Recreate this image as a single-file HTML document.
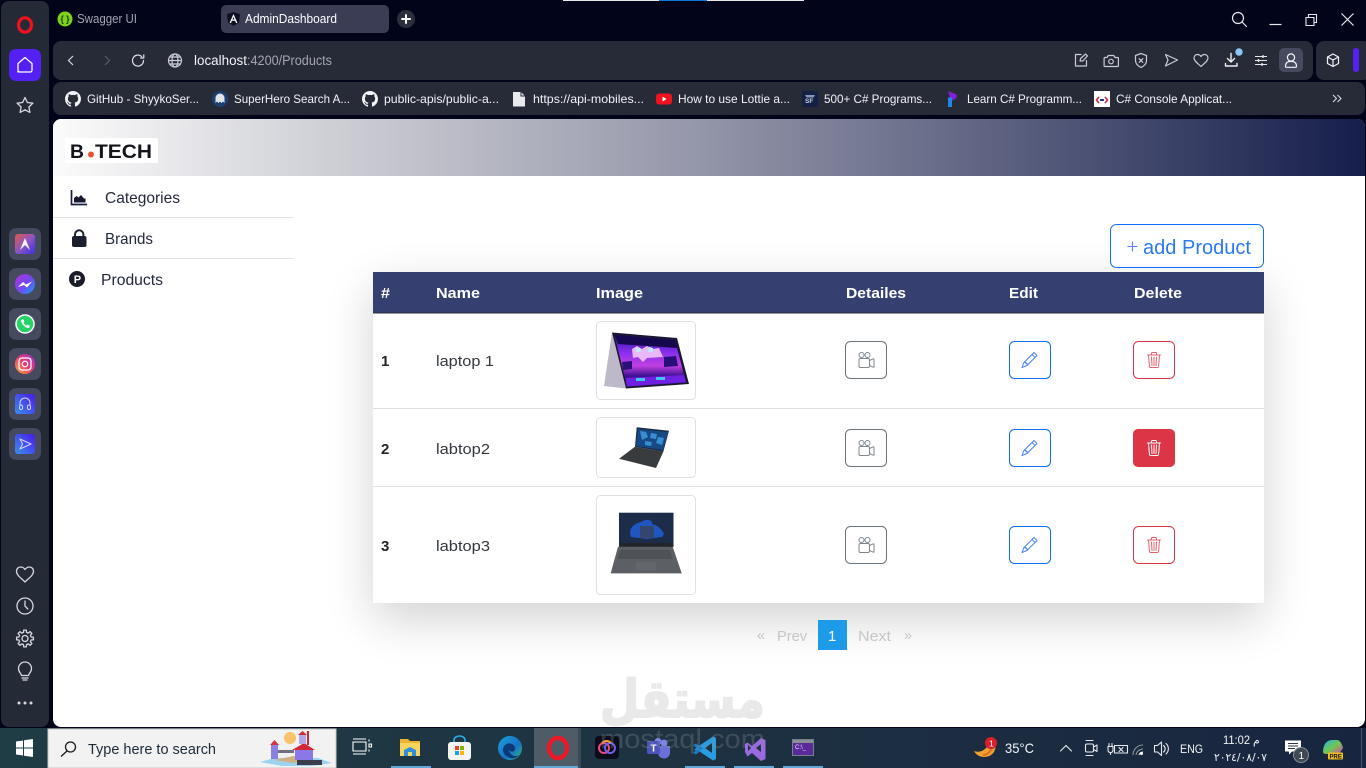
<!DOCTYPE html>
<html lang="en"><head><meta charset="utf-8"><title>AdminDashboard</title>
<style>
html,body{margin:0;padding:0;background:#02041a;width:1366px;height:768px;overflow:hidden}
svg{display:block}
text{font-family:"Liberation Sans","DejaVu Sans",sans-serif}
.tb{font-size:12px;fill:#f2f3f6}
.ico{fill:none;stroke:#c9ccd4;stroke-width:1.2;stroke-linecap:round;stroke-linejoin:round}
.sb{fill:none;stroke:#d6d8de;stroke-width:1.3;stroke-linecap:round;stroke-linejoin:round}
.nav{font-size:16px;fill:#24283c}
.th{font-size:15px;font-weight:bold;fill:#fff}
.td{font-size:15px;fill:#33373d}
.tn{font-size:15px;font-weight:bold;fill:#212529}
.pg{font-size:15px;fill:#c6c6c6}
.tray{fill:none;stroke:#e8ebee;stroke-width:1.1;stroke-linecap:round;stroke-linejoin:round}
</style></head><body>
<svg width="1366" height="768" viewBox="0 0 1366 768" xmlns="http://www.w3.org/2000/svg">
<defs>
<linearGradient id="hd" x1="0" x2="1" y1="0" y2="0"><stop offset="0" stop-color="#fbfbfb"/><stop offset=".25" stop-color="#c6c7cf"/><stop offset=".5" stop-color="#9295a8"/><stop offset=".75" stop-color="#565b7b"/><stop offset="1" stop-color="#151e4b"/></linearGradient>
<linearGradient id="tk" x1="0" x2="1" y1="0" y2="0"><stop offset="0" stop-color="#1f3d45"/><stop offset=".5" stop-color="#1e3242"/><stop offset="1" stop-color="#18253f"/></linearGradient>
<linearGradient id="s1" x1="0" x2="1" y1="0" y2="1"><stop offset="0" stop-color="#e2584a"/><stop offset=".5" stop-color="#8e55c0"/><stop offset="1" stop-color="#3a30e0"/></linearGradient>
<linearGradient id="s2" x1="0" x2="1" y1="0" y2="1"><stop offset="0" stop-color="#b530d8"/><stop offset=".55" stop-color="#6f4cf0"/><stop offset="1" stop-color="#12a0f0"/></linearGradient>
<linearGradient id="s3" x1="1" x2="0" y1="0" y2="1"><stop offset="0" stop-color="#9a30d8"/><stop offset=".5" stop-color="#e83a70"/><stop offset="1" stop-color="#fcb030"/></linearGradient>
<linearGradient id="s4" x1="0" x2="1" y1="1" y2="0"><stop offset="0" stop-color="#3a90f0"/><stop offset="1" stop-color="#4a18e8"/></linearGradient>
<linearGradient id="lp1" x1="0" x2="0" y1="0" y2="1"><stop offset="0" stop-color="#2a10a0"/><stop offset=".35" stop-color="#8a30f0"/><stop offset=".6" stop-color="#c040e0"/><stop offset=".8" stop-color="#3a1090"/><stop offset="1" stop-color="#6a20e0"/></linearGradient>
<linearGradient id="edge" x1="0" x2="1" y1="0" y2="1"><stop offset="0" stop-color="#1aa0d8"/><stop offset=".6" stop-color="#1a70c8"/><stop offset="1" stop-color="#2fc070"/></linearGradient>
<linearGradient id="cp" x1="0" x2="1" y1="0" y2="1"><stop offset="0" stop-color="#28b0e8"/><stop offset=".5" stop-color="#70c850"/><stop offset="1" stop-color="#e040b0"/></linearGradient>
<filter id="blur" x="-30%" y="-40%" width="160%" height="180%"><feGaussianBlur stdDeviation="24"/></filter>
<clipPath id="mainclip"><rect x="293" y="176" width="1072" height="551"/></clipPath>
<symbol id="reel" viewBox="0 0 16 16"><path d="M6 3a3 3 0 1 1-6 0 3 3 0 0 1 6 0M1 3a2 2 0 1 0 4 0 2 2 0 0 0-4 0"/><path d="M9 6h.5a2 2 0 0 1 1.983 1.738l3.11-1.382A1 1 0 0 1 16 7.269v7.462a1 1 0 0 1-1.406.913l-3.111-1.382A2 2 0 0 1 9.5 16H2a2 2 0 0 1-2-2V8a2 2 0 0 1 2-2zm6 8.73V7.27l-3.5 1.555v4.35zM1 8v6a1 1 0 0 0 1 1h7.5a1 1 0 0 0 1-1V8a1 1 0 0 0-1-1H2a1 1 0 0 0-1 1"/><path d="M9 6a3 3 0 1 0 0-6 3 3 0 0 0 0 6M7 3a2 2 0 1 1 4 0 2 2 0 0 1-4 0"/></symbol>
<symbol id="pen" viewBox="0 0 16 16"><path d="M12.146.146a.5.5 0 0 1 .708 0l3 3a.5.5 0 0 1 0 .708l-10 10a.5.5 0 0 1-.168.11l-5 2a.5.5 0 0 1-.65-.65l2-5a.5.5 0 0 1 .11-.168zM11.207 2.5 13.5 4.793 14.793 3.5 12.5 1.207zm1.586 3L10.5 3.207 4 9.707V10h.5a.5.5 0 0 1 .5.5v.5h.5a.5.5 0 0 1 .5.5v.5h.293zm-9.761 5.175-.106.106-1.528 3.821 3.821-1.528.106-.106A.5.5 0 0 1 5 12.5V12h-.5a.5.5 0 0 1-.5-.5V11h-.5a.5.5 0 0 1-.468-.325"/></symbol>
<symbol id="trash" viewBox="0 0 16 16"><path d="M6.5 1h3a.5.5 0 0 1 .5.5v1H6v-1a.5.5 0 0 1 .5-.5M11 2.5v-1A1.5 1.5 0 0 0 9.5 0h-3A1.5 1.5 0 0 0 5 1.5v1H1.5a.5.5 0 0 0 0 1h.538l.853 10.66A2 2 0 0 0 4.885 16h6.23a2 2 0 0 0 1.994-1.84l.853-10.66h.538a.5.5 0 0 0 0-1zm1.958 1-.846 10.58a1 1 0 0 1-.997.92h-6.23a1 1 0 0 1-.997-.92L3.042 3.5zm-7.487 1a.5.5 0 0 1 .528.47l.5 8.5a.5.5 0 0 1-.998.06L5 5.03a.5.5 0 0 1 .47-.53Zm5.058 0a.5.5 0 0 1 .47.53l-.5 8.5a.5.5 0 1 1-.998-.06l.5-8.5a.5.5 0 0 1 .528-.47M8 4.5a.5.5 0 0 1 .5.5v8.5a.5.5 0 0 1-1 0V5a.5.5 0 0 1 .5-.5"/></symbol>
<symbol id="gh" viewBox="0 0 16 16"><path fill="#f2f3f6" d="M8 0C3.58 0 0 3.58 0 8c0 3.54 2.29 6.53 5.47 7.59.4.07.55-.17.55-.38 0-.19-.01-.82-.01-1.49-2.01.37-2.53-.49-2.69-.94-.09-.23-.48-.94-.82-1.13-.28-.15-.68-.52-.01-.53.63-.01 1.08.58 1.23.82.72 1.21 1.87.87 2.33.66.07-.52.28-.87.51-1.07-1.78-.2-3.64-.89-3.64-3.95 0-.87.31-1.59.82-2.15-.08-.2-.36-1.02.08-2.12 0 0 .67-.21 2.2.82.64-.18 1.32-.27 2-.27s1.36.09 2 .27c1.53-1.04 2.2-.82 2.2-.82.44 1.1.16 1.92.08 2.12.51.56.82 1.27.82 2.15 0 3.07-1.87 3.75-3.65 3.95.29.25.54.73.54 1.48 0 1.07-.01 1.93-.01 2.2 0 .21.15.46.55.38A8.01 8.01 0 0 0 16 8c0-4.42-3.58-8-8-8"/></symbol>
</defs>

<!-- window background -->
<rect width="1366" height="768" fill="#02041a"/>
<rect x="563" y="0" width="96" height="1" fill="#e8e8e8"/><rect x="659" y="0" width="48" height="1" fill="#0a78d4"/><rect x="707" y="0" width="97" height="1" fill="#e8e8e8"/>

<!-- left sidebar -->
<rect x="1" y="1" width="48" height="726" rx="8" fill="#252a37"/>
<ellipse cx="25" cy="25" rx="6.5" ry="7.2" fill="none" stroke="#f0101e" stroke-width="3.2"/>
<rect x="9" y="49" width="32" height="32" rx="7" fill="#5420f4"/>
<path d="M18 72V63.5L25 57.5L32 63.5V70Q32 72 30 72H20Q18 72 18 70Z" fill="none" stroke="#fff" stroke-width="1.3" stroke-linejoin="round"/>
<path class="sb" d="M25 97.5l2.4 5 5.5.7-4 3.8 1 5.4-4.9-2.6-4.9 2.6 1-5.4-4-3.8 5.5-.7z"/>
<g fill="#454a5f"><rect x="9" y="228" width="32" height="32" rx="7"/><rect x="9" y="268" width="32" height="32" rx="7"/><rect x="9" y="308" width="32" height="32" rx="7"/><rect x="9" y="348" width="32" height="32" rx="7"/><rect x="9" y="388" width="32" height="32" rx="7"/><rect x="9" y="428" width="32" height="32" rx="7"/></g>
<rect x="15" y="234" width="20" height="20" rx="3" fill="url(#s1)"/><path d="M20 250l5-12 5 12-5-5z" fill="#f5f5f5"/>
<circle cx="25" cy="284" r="10" fill="url(#s2)"/><path d="M18 287l5-5 3 2.500 6-3-5 6-3-2.500z" fill="#fff"/>
<circle cx="25" cy="324" r="9" fill="#25d366" stroke="#fff" stroke-width="1.500"/><path d="M21 320c0 4 4 8 8 8l1-2-2.500-1.500-1 1c-1.500-.5-2.500-1.500-3-3l1-1-1.500-2.500z" fill="#fff"/>
<circle cx="25" cy="364" r="10" fill="url(#s3)"/><rect x="19" y="358" width="12" height="12" rx="3" fill="none" stroke="#fff" stroke-width="1.300"/><circle cx="25" cy="364" r="2.800" fill="none" stroke="#fff" stroke-width="1.200"/>
<rect x="15" y="394" width="20" height="20" rx="3" fill="url(#s4)"/><path d="M20 406v-3a5 5 0 0 1 10 0v3" fill="none" stroke="#d8d0ff" stroke-width="1"/><rect x="19.500" y="405" width="3" height="4.500" rx="1.500" fill="none" stroke="#d8d0ff"/><rect x="27.500" y="405" width="3" height="4.500" rx="1.500" fill="none" stroke="#d8d0ff"/>
<rect x="15" y="434" width="20" height="20" rx="3" fill="url(#s4)"/><path d="M20 439l11 5-11 5 2.500-5z" fill="none" stroke="#d8d0ff" stroke-width="1.100" stroke-linejoin="round"/>
<path class="sb" d="M25 582C21 578 16.500 575 16.500 571.500C16.500 568.500 18.500 567 20.500 567C22.500 567 24 568 25 569.500C26 568 27.500 567 29.500 567C31.500 567 33.500 568.500 33.500 571.500C33.500 575 29 578 25 582Z"/>
<circle class="sb" cx="25" cy="606" r="8"/><path class="sb" d="M25 601v5l2.800 3"/>
<g transform="translate(25 638.500)"><circle class="sb" r="3"/><polygon class="sb" points="-1.52,-6.11 -1.33,-8.4 1.33,-8.4 1.52,-6.11 3.25,-5.39 5,-6.88 6.88,-5 5.39,-3.25 6.11,-1.52 8.4,-1.33 8.4,1.33 6.11,1.52 5.39,3.25 6.88,5 5,6.88 3.25,5.39 1.52,6.11 1.33,8.4 -1.33,8.4 -1.52,6.11 -3.25,5.39 -5,6.88 -6.88,5 -5.39,3.25 -6.11,1.52 -8.4,1.33 -8.4,-1.33 -6.11,-1.52 -5.39,-3.25 -6.88,-5 -5,-6.88 -3.25,-5.39"/></g>
<path class="sb" d="M21.500 675.500c0-2-3-3-3-7a6.500 6.500 0 0 1 13 0c0 4-3 5-3 7zM22 678h6M23 680h4"/>
<g fill="#d6d8de"><circle cx="19" cy="703" r="1.500"/><circle cx="25" cy="703" r="1.500"/><circle cx="31" cy="703" r="1.500"/></g>

<!-- tabs -->
<circle cx="65" cy="19" r="7.500" fill="#7bd11c"/><text x="60.500" y="22" font-size="9" fill="#1c3a10" font-weight="bold" textLength="9" lengthAdjust="spacingAndGlyphs">{ }</text>
<text x="77" y="23" font-size="12.500" fill="#a3a6b0" textLength="60" lengthAdjust="spacingAndGlyphs">Swagger UI</text>
<rect x="221" y="5" width="168" height="28" rx="5" fill="#3a3d54"/>
<path d="M233.500 12l6.500 2.300-1 8.500-5.500 3-5.500-3-1-8.500z" fill="#0e1020"/><path d="M233.500 14l-4 9h1.500l.9-2.200h3.200l.9 2.200h1.500zM232.500 19.500l1-2.600 1 2.600z" fill="#fff"/>
<text x="245" y="23" font-size="12.500" fill="#fff" textLength="92" lengthAdjust="spacingAndGlyphs">AdminDashboard</text>
<circle cx="406" cy="19" r="9" fill="#2b2f3c"/><path d="M406 15v8M402 19h8" stroke="#fff" stroke-width="2" stroke-linecap="round"/>
<circle class="ico" cx="1238" cy="18" r="5.500" style="stroke:#e8e8ec"/><path class="ico" d="M1242 22l4.500 4.500" style="stroke:#e8e8ec"/>
<path d="M1269.500 24.500h12" stroke="#e8e8ec" stroke-width="1.200"/>
<path d="M1306 17.500h8v8h-8zM1308.500 17.500v-3h8v8h-2.500" fill="none" stroke="#e8e8ec" stroke-width="1.100"/>
<path d="M1341.500 13.500l12 12M1353.500 13.500l-12 12" stroke="#e8e8ec" stroke-width="1.200"/>

<!-- address bar -->
<rect x="53" y="41" width="1260" height="39" rx="8" fill="#272b38"/>
<rect x="1316" y="41" width="55" height="39" rx="8" fill="#272b38"/>
<path d="M73 56l-4.500 4.500L73 65" fill="none" stroke="#d6d8de" stroke-width="1.200"/>
<path d="M105 56l4.500 4.500L105 65" fill="none" stroke="#5b5f6c" stroke-width="1.200"/>
<path class="ico" d="M143.500 60.500a5.500 5.500 0 1 1-1.800-4M143.800 54.800v3.200h-3.200" style="stroke:#e0e2e8"/>
<circle class="ico" cx="175" cy="60.500" r="6.500"/><ellipse class="ico" cx="175" cy="60.500" rx="3" ry="6.500"/><path class="ico" d="M168.500 60.500h13M169.500 57h11M169.500 64h11"/>
<text x="194" y="65" font-size="13.500" fill="#f2f3f6" textLength="53" lengthAdjust="spacingAndGlyphs">localhost</text>
<text x="247" y="65" font-size="13.500" fill="#a3a6b0" textLength="85" lengthAdjust="spacingAndGlyphs">:4200/Products</text>
<path class="ico" d="M1081 54.500h-5.500v11.500h11v-5.500M1080 61l.6-2.500 5-4.500 1.900 1.900-4.500 5z"/>
<path class="ico" d="M1104.500 57.500h2.500l1.300-2h5.400l1.300 2h2.500a.9.9 0 0 1 .9.900v7.200a.9.900 0 0 1-.9.900h-12.500a.9.900 0 0 1-.9-.900v-7.200a.9.900 0 0 1 .9-.900z"/><circle class="ico" cx="1111" cy="61.500" r="2.300"/>
<path class="ico" d="M1141 53.500l5.500 2v5c0 3.500-2.500 5.500-5.500 7-3-1.500-5.500-3.500-5.500-7v-5zM1139.200 58.700l3.600 3.600M1142.800 58.700l-3.600 3.600"/>
<path class="ico" d="M1165.500 54.500l12 5.500-12 6 2.500-6z"/>
<path class="ico" d="M1201 66.500c-3-3-7-5.500-7-8.500 0-2.500 2-3.500 3.500-3.500 1.500 0 2.700.8 3.500 2 .8-1.200 2-2 3.500-2 1.500 0 3.500 1 3.500 3.500 0 3-4 5.500-7 8.500z"/>
<path d="M1231 53.500v8M1227.500 58.500l3.500 3.500 3.500-3.500M1225.500 63.500v2.500h11.500v-2.500" fill="none" stroke="#f0f0f4" stroke-width="1.400" stroke-linecap="round" stroke-linejoin="round"/>
<circle cx="1239" cy="52" r="3.700" fill="#8cc6f6"/>
<path d="M1255 56.500h12M1255 60.500h12M1255 64.500h12" stroke="#e8e8ec" stroke-width="1.100"/><path d="M1263 55v3M1258.500 59v3M1262 63v3" stroke="#e8e8ec" stroke-width="1.300"/>
<rect x="1279" y="48" width="24" height="24" rx="5" fill="#454a5f"/>
<circle cx="1291" cy="57.500" r="3.600" fill="none" stroke="#f2f3f6" stroke-width="1.200"/><path d="M1285.500 66.500c0-3 1.500-4.500 3.500-5h4c2 .5 3.500 2 3.500 5 0 .5-.5 .8-1 .8h-9c-.5 0-1-.3-1-.8z" fill="none" stroke="#f2f3f6" stroke-width="1.200"/>
<path d="M1333 54l5.500 3v6.500l-5.500 3-5.500-3V57zM1327.500 57l5.500 3 5.500-3M1333 60v6.500" fill="none" stroke="#f2f3f6" stroke-width="1.200" stroke-linejoin="round"/>
<rect x="1353" y="48" width="6" height="24" rx="3" fill="#5420f4"/>

<!-- bookmarks -->
<rect x="53" y="82" width="1312" height="33" rx="8" fill="#272b38"/>
<use href="#gh" x="65" y="91" width="16" height="16"/>
<text class="tb" x="87" y="103" textLength="112" lengthAdjust="spacingAndGlyphs">GitHub - ShyykoSer...</text>
<circle cx="220" cy="99" r="8" fill="#1b3f6e"/><path d="M215.500 103v-5a4.500 4.500 0 0 1 9 0v5l-1.500-1.500-1.500 1.500-1.500-1.500-1.500 1.500-1.500-1.500z" fill="#e0e4ea"/>
<text class="tb" x="234" y="103" textLength="116" lengthAdjust="spacingAndGlyphs">SuperHero Search A...</text>
<use href="#gh" x="362" y="91" width="16" height="16"/>
<text class="tb" x="384" y="103" textLength="115" lengthAdjust="spacingAndGlyphs">public-apis/public-a...</text>
<path d="M513 92h8l4 4v10.500h-12z" fill="#e8eaee"/><path d="M521 92v4h4" fill="none" stroke="#272b38"/>
<text class="tb" x="533" y="103" textLength="111" lengthAdjust="spacingAndGlyphs">https://api-mobiles...</text>
<rect x="656" y="93.500" width="16" height="11" rx="3" fill="#f0121e"/><path d="M662.500 96.500v5l4-2.500z" fill="#fff"/>
<text class="tb" x="678" y="103" textLength="112" lengthAdjust="spacingAndGlyphs">How to use Lottie a...</text>
<rect x="802" y="91" width="16" height="16" fill="#152045"/><text x="805" y="103" font-size="6.500" fill="#c8d0e0" font-weight="bold">SF</text><path d="M805 95h10l-1.500 2.500h-7z" fill="#8898b8"/>
<text class="tb" x="824" y="103" textLength="108" lengthAdjust="spacingAndGlyphs">500+ C# Programs...</text>
<path d="M948 91l8.500 3.500c1 3-1 5.500-5.500 6z" fill="#8320e0"/><rect x="948" y="97.500" width="4" height="9.500" fill="#1e88e8"/>
<text class="tb" x="967" y="103" textLength="115" lengthAdjust="spacingAndGlyphs">Learn C# Programm...</text>
<rect x="1094" y="91" width="16" height="16" fill="#fff"/><path d="M1099 97l-2.500 3 2.500 3M1105 97l2.500 3-2.500 3" fill="none" stroke="#d02a38" stroke-width="1.600"/><path d="M1100 100h4" stroke="#2a3a88" stroke-width="2"/>
<text class="tb" x="1116" y="103" textLength="116" lengthAdjust="spacingAndGlyphs">C# Console Applicat...</text>
<path d="M1333 95l3.500 3.500-3.500 3.500M1337.500 95l3.500 3.500-3.500 3.500" fill="none" stroke="#d6d8de" stroke-width="1.100"/>

<!-- page -->
<rect x="53" y="119" width="1312" height="608" rx="8" fill="#fff"/>
<path d="M53 176V127a8 8 0 0 1 8-8H1357a8 8 0 0 1 8 8V176z" fill="url(#hd)"/>
<rect x="65" y="138" width="93" height="25" fill="#fff"/>
<text x="70" y="158" font-size="19.500" font-weight="bold" fill="#14151c" textLength="14" lengthAdjust="spacingAndGlyphs">B</text>
<circle cx="91" cy="154.500" r="3" fill="#ea4f30"/>
<text x="95" y="158" font-size="19.500" font-weight="bold" fill="#14151c" textLength="57" lengthAdjust="spacingAndGlyphs">TECH</text>

<!-- shadow -->
<g clip-path="url(#mainclip)"><rect x="373" y="288" width="891" height="331" fill="#000" opacity=".175" filter="url(#blur)"/></g>

<!-- side menu -->
<rect x="53" y="217" width="240" height="1" fill="#dee2e6"/><rect x="53" y="258" width="240" height="1" fill="#dee2e6"/>
<path d="M71.500 190v14.500h15.500" fill="none" stroke="#1c2040" stroke-width="1.700"/><path d="M74 202.500v-4.500l2.500-2 2 1.500 2.500-2.500 3 3.500 1.500 0v4z" fill="#15182e"/>
<text class="nav" x="105" y="203" textLength="75" lengthAdjust="spacingAndGlyphs">Categories</text>
<rect x="72" y="236" width="14.500" height="11" rx="2" fill="#1d1f2e"/><path d="M75 237v-2.500a4.200 4.200 0 0 1 8.400 0V237" fill="none" stroke="#1d1f2e" stroke-width="2"/>
<text class="nav" x="105" y="244" textLength="48" lengthAdjust="spacingAndGlyphs">Brands</text>
<circle cx="77" cy="279" r="8" fill="#1a1c28"/><text x="73.700" y="283" font-size="11" font-weight="bold" fill="#fff">P</text>
<text class="nav" x="101" y="285" textLength="62" lengthAdjust="spacingAndGlyphs">Products</text>

<!-- add button -->
<rect x="1110.500" y="224.500" width="153" height="43" rx="6" fill="#fff" stroke="#0d6efd"/>
<path d="M1132.500 241.500v10M1127.500 246.500h10" stroke="#5a80f0" stroke-width="1.100"/>
<text x="1143" y="254" font-size="20" fill="#2b78f0" textLength="108" lengthAdjust="spacingAndGlyphs">add Product</text>

<!-- table -->
<rect x="373" y="272" width="891" height="331" fill="#fff"/>
<rect x="373" y="272" width="891" height="41" fill="#354070"/>
<rect x="373" y="312.500" width="891" height="1" fill="#2c3040"/>
<text class="th" x="381" y="298" textLength="9" lengthAdjust="spacingAndGlyphs">#</text>
<text class="th" x="436" y="298" textLength="44" lengthAdjust="spacingAndGlyphs">Name</text>
<text class="th" x="596" y="298" textLength="47" lengthAdjust="spacingAndGlyphs">Image</text>
<text class="th" x="846" y="298" textLength="60" lengthAdjust="spacingAndGlyphs">Detailes</text>
<text class="th" x="1009" y="298" textLength="29" lengthAdjust="spacingAndGlyphs">Edit</text>
<text class="th" x="1134" y="298" textLength="48" lengthAdjust="spacingAndGlyphs">Delete</text>
<rect x="373" y="408" width="891" height="1" fill="#dee2e6"/><rect x="373" y="486" width="891" height="1" fill="#dee2e6"/>

<text class="tn" x="381" y="366">1</text><text class="td" x="436" y="366" textLength="58" lengthAdjust="spacingAndGlyphs">laptop 1</text>
<text class="tn" x="381" y="454">2</text><text class="td" x="436" y="454" textLength="54" lengthAdjust="spacingAndGlyphs">labtop2</text>
<text class="tn" x="381" y="551">3</text><text class="td" x="436" y="551" textLength="54" lengthAdjust="spacingAndGlyphs">labtop3</text>

<rect x="596.500" y="321.500" width="99" height="78" rx="4" fill="#fff" stroke="#dee2e6"/>
<rect x="596.500" y="417.500" width="99" height="60" rx="4" fill="#fff" stroke="#dee2e6"/>
<rect x="596.500" y="495.500" width="99" height="99" rx="4" fill="#fff" stroke="#dee2e6"/>

<!-- laptop 1 -->
<path d="M612 332.500L604 386l22 2.500z" fill="#bdb9c8"/>
<path d="M612 332.500l65 5.500 12 46-63 4.500z" fill="#1a1830"/>
<path d="M614.500 335l60.500 5 11 42.500-59 4z" fill="url(#lp1)"/>
<path d="M614.500 335l60.500 5 2 8-59-4z" fill="#16084e"/>
<path d="M632 349l5-3 5 3 5-3 6 3 6-1 4 9-16 1-4 4-5-5-5 1z" fill="#e9b8f8"/>
<path d="M636 347.500l4 .5 1 4h-5zM649 347l4 1v4h-5z" fill="#bfeaff"/>
<path d="M622 362l10-1 0 8-9 1zM664 357l12-1 2 10-14 1z" fill="#2a0f78"/>
<path d="M626 378l58-3 2 7-59 4z" fill="#7020e0"/>
<path d="M636 378h9v3h-9zM656 377h9v3h-9z" fill="#42c4f2"/>

<!-- laptop 2 -->
<path d="M636.700 427.300L669 430.700 663.300 451.700 635 446.700z" fill="#1c2a44"/>
<path d="M638 429l30 3-5 18-27-4z" fill="#164a86"/>
<path d="M640 431l6 1 2 5-6 3zM651 433l6 1-1 5-6-1zM645 441l7 1-1 4-6-1zM658 437l6 1-2 7-6-2z" fill="#3a8ed0"/>
<path d="M635 446.700l28.300 5L656 468l-37-9.300z" fill="#383c3e"/>

<!-- laptop 3 -->
<rect x="619" y="512.700" width="54.500" height="34" fill="#1d2c48"/>
<path d="M631 537c-3-8 2-13 10-15 6-4 12-2 11 2 5 1 10 5 12 10l-2 3-15 2z" fill="#1f56c0"/>
<rect x="640" y="526" width="14" height="12" fill="#34466e"/>
<rect x="619" y="543" width="54.500" height="4" fill="#22262c"/>
<path d="M618 546.700h54.700l9 26.600h-71z" fill="#5c6064"/>
<path d="M620 550h50l2.500 9h-55z" fill="#4e5256"/>
<rect x="636" y="562" width="20" height="8" fill="#63676c"/>
<rect x="611" y="573" width="71" height="1" fill="#bfc2c6"/>

<!-- action buttons -->
<g fill="#fff">
<rect x="845.500" y="341.500" width="41" height="37" rx="5" stroke="#6c757d"/><rect x="845.500" y="429.500" width="41" height="37" rx="5" stroke="#6c757d"/><rect x="845.500" y="526.500" width="41" height="37" rx="5" stroke="#6c757d"/>
<rect x="1009.500" y="341.500" width="41" height="37" rx="5" stroke="#0d6efd"/><rect x="1009.500" y="429.500" width="41" height="37" rx="5" stroke="#0d6efd"/><rect x="1009.500" y="526.500" width="41" height="37" rx="5" stroke="#0d6efd"/>
<rect x="1133.500" y="341.500" width="41" height="37" rx="5" stroke="#dc3545"/><rect x="1133.500" y="526.500" width="41" height="37" rx="5" stroke="#dc3545"/>
</g>
<rect x="1133" y="429" width="42" height="38" rx="5" fill="#dc3545"/>
<g fill="#80868d"><use href="#reel" x="858" y="352" width="17" height="16"/><use href="#reel" x="858" y="440" width="17" height="16"/><use href="#reel" x="858" y="537" width="17" height="16"/></g>
<g fill="#4a80f0"><use href="#pen" x="1021" y="352" width="17" height="16"/><use href="#pen" x="1021" y="440" width="17" height="16"/><use href="#pen" x="1021" y="537" width="17" height="16"/></g>
<g fill="#e4606c"><use href="#trash" x="1146" y="352" width="16" height="16"/><use href="#trash" x="1146" y="537" width="16" height="16"/></g>
<g fill="#fff"><use href="#trash" x="1146" y="440" width="16" height="16"/></g>

<!-- pagination -->
<text class="pg" x="757" y="640" font-size="13" textLength="8" lengthAdjust="spacingAndGlyphs">«</text>
<text class="pg" x="777" y="641" textLength="30" lengthAdjust="spacingAndGlyphs">Prev</text>
<rect x="818" y="620" width="29" height="30" fill="#1e9be8"/>
<text x="828" y="641" font-size="15" fill="#fff">1</text>
<text class="pg" x="858" y="641" textLength="33" lengthAdjust="spacingAndGlyphs">Next</text>
<text class="pg" x="904" y="640" font-size="13" textLength="8" lengthAdjust="spacingAndGlyphs">»</text>

<!-- taskbar -->
<rect x="0" y="728" width="1366" height="40" fill="url(#tk)"/>
<path d="M16 741.500l7-1v7h-7zM24 740.300l9-1.300v8.500h-9zM16 748.500h7v7l-7-1zM24 748.500h9v8.500l-9-1.300z" fill="#fff"/>
<rect x="48" y="729" width="288" height="39" fill="#f2f2f2" stroke="#c8c8c8"/>
<circle cx="70.500" cy="747" r="5" fill="none" stroke="#1a1a1a" stroke-width="1.300"/><path d="M67 751l-6 5.500" stroke="#1a1a1a" stroke-width="1.300"/>
<text x="88" y="754" font-size="14.500" fill="#1c2a3a" textLength="128" lengthAdjust="spacingAndGlyphs">Type here to search</text>
<!-- search illustration -->
<circle cx="290" cy="738" r="6" fill="#f6c26a"/>
<path d="M260 762l14-4h44l14 5-20 3h-30z" fill="#9cd4f0"/>
<path d="M274 760l20-4 10 3-10 4z" fill="#d0b080"/>
<rect x="271" y="745" width="7" height="14" fill="#8a80e0"/><path d="M270 745l4.500-5 4.500 5z" fill="#d83040"/>
<rect x="278" y="750" width="16" height="3" fill="#707080"/>
<rect x="295" y="750" width="18" height="10" fill="#8a78e8"/><path d="M292 750l12-7 11 7z" fill="#d02838"/>
<rect x="299" y="735" width="7" height="9" fill="#b0a8e8"/><path d="M298 735l4.500-4 4.500 4z" fill="#d02838"/><rect x="307" y="731" width="2" height="14" fill="#d02838"/>
<rect x="297" y="760" width="25" height="5" fill="#3a3d4c"/>

<path d="M353 742h13v9h-13zM353 739h13M353 754h13M369 739.500v2M369 744h2.500v3H369zM369 749.500v2" fill="none" stroke="#fff" stroke-width="1.100"/>
<path d="M400 739h8l2 2h10v15h-20z" fill="#f0b030"/><path d="M400 743h20v13h-20z" fill="#f9d45c"/><path d="M404 756v-6l6-3 6 3v6h-4v-4h-4v4z" fill="#2e90d8"/>
<rect x="391" y="766" width="40" height="2" fill="#5fa8d8"/>
<rect x="448" y="742" width="23" height="18" rx="3" fill="#f4f4f4"/><path d="M454 742v-2a5.500 4 0 0 1 11 0v2" fill="none" stroke="#2ab0e8" stroke-width="1.600"/><rect x="455" y="746" width="4" height="4" fill="#ea4030"/><rect x="460" y="746" width="4" height="4" fill="#7fb800"/><rect x="455" y="751" width="4" height="4" fill="#18a0e8"/><rect x="460" y="751" width="4" height="4" fill="#f8b808"/>
<circle cx="510" cy="748" r="12" fill="url(#edge)"/><path d="M503 750c0-5 5-8 9-6 3 1.500 4 5 2 7-2 1.500-4 0-5-1 0 4 5 8 10 5-3 4-8 4-11 2-3-1.500-5-4-5-7z" fill="#0c3a78"/>
<rect x="534" y="728" width="44" height="40" fill="#4d5c66"/>
<ellipse cx="558" cy="748" rx="9" ry="10" fill="none" stroke="#ea1a28" stroke-width="4.500"/>
<rect x="534" y="766" width="44" height="2" fill="#5fa8d8"/>
<rect x="578" y="728" width="3" height="40" fill="#3c4a54"/>
<rect x="595" y="736" width="24" height="23" rx="4" fill="#0b0d1a"/><circle cx="604" cy="748" r="5" fill="none" stroke="#e84a80" stroke-width="2"/><circle cx="610" cy="748" r="5" fill="none" stroke="#6a60f0" stroke-width="2"/><path d="M602 743a6 6 0 0 1 9 0" fill="none" stroke="#f0a030" stroke-width="2"/>
<circle cx="664" cy="743" r="3.500" fill="#7b83eb"/><circle cx="658" cy="741.500" r="3.500" fill="#7b83eb"/><path d="M654 746h16v6a6 6 0 0 1-12 1z" fill="#6a70d8"/><rect x="647" y="741" width="13" height="13" rx="1.500" fill="#4b53bc"/><text x="650.500" y="751.500" font-size="10" font-weight="bold" fill="#fff">T</text>
<path d="M694 750l4-3.500 15-10 3 1.500v21l-3 1.500-15-10zM712 753v-10l-7 5z" fill="#2a9ce0" fill-rule="evenodd"/><path d="M693 745l3-1.500 7 4.500-3 3zM693 753l3 1.500 5-4-3-2.500z" fill="#1a7ac0"/>
<path d="M745 752v-8l2.500-1.500 4.500 3.500 9-8 4.500 2v19l-4.500 2-9-8-4.500 3.500zM761 752v-8l-5 4zM748 751v-6l3 3z" fill="#9a6ae0" fill-rule="evenodd"/>
<rect x="792.500" y="739.500" width="21" height="16" fill="#5a2a98" stroke="#77808a"/><rect x="793" y="740" width="20" height="3" fill="#8a8f98"/><text x="795" y="749" font-size="6" fill="#e8e8ff" font-family="Liberation Mono, monospace">C:\_</text>
<rect x="685" y="766" width="40" height="2" fill="#5fa8d8"/><rect x="734" y="766" width="40" height="2" fill="#5fa8d8"/><rect x="783" y="766" width="40" height="2" fill="#5fa8d8"/>

<!-- tray -->
<path d="M974 751c5 2 12 0 15-8l6 0c2 8-3 14-11 14-4 0-8-2-10-6z" fill="#f0a030"/><path d="M983 755c4 0 8-3 10-9" stroke="#e07020" fill="none" stroke-width="2"/>
<circle cx="991" cy="743" r="6" fill="#d81f2c"/><text x="989" y="746.500" font-size="8.500" fill="#fff">1</text>
<text x="1005" y="753" font-size="14" fill="#f2f4f6" textLength="29" lengthAdjust="spacingAndGlyphs">35°C</text>
<path class="tray" d="M1060.500 751l5.500-5.500 5.500 5.500"/>
<rect class="tray" x="1085.500" y="744" width="8" height="8" rx="1.500"/><path class="tray" d="M1093.500 747l3.500-2v6.500l-3.500-2M1086 740.500h7M1086 755.500h7"/>
<path class="tray" d="M1108 746.500v3.500c0 1.500 1 2.500 2.500 2.500s2.500-1 2.500-2.500v-3.500h-5zM1109 746.500v-3M1112 746.500v-3M1110.500 752.500v2"/><rect class="tray" x="1114.500" y="745.500" width="13" height="7.500"/><path class="tray" d="M1119 747.500l4 4M1123 747.500l-4 4"/>
<path d="M1133 755a10 10 0 0 1 10-10M1136 755a7 7 0 0 1 7-6" fill="none" stroke="#8a9098" stroke-width="1.100"/><path d="M1139 755a4 4 0 0 1 4-3" fill="none" stroke="#e8ebee" stroke-width="1.100"/><circle cx="1141.500" cy="753.500" r="1.500" fill="#fff"/>
<path class="tray" d="M1154.500 745.500h3l4-3.500v13.500l-4-3.500h-3zM1163.500 745.500a4 4 0 0 1 0 6.500M1166 743.500a7 7 0 0 1 0 10.500"/>
<text x="1180" y="753" font-size="12" fill="#f2f4f6" textLength="23" lengthAdjust="spacingAndGlyphs">ENG</text>
<text x="1223" y="744" font-size="12" fill="#f2f4f6" textLength="27" lengthAdjust="spacingAndGlyphs">11:02</text>
<text x="1253" y="744" font-size="11" fill="#f2f4f6" style="font-family:'DejaVu Sans',sans-serif">م</text>
<text x="1214" y="761" font-size="11" fill="#f2f4f6" direction="ltr" style="font-family:'DejaVu Sans',sans-serif;unicode-bidi:bidi-override" textLength="53" lengthAdjust="spacingAndGlyphs">٢٠٢٤/٠٨/٠٧</text>
<path d="M1285 740.500h16v11h-9l-3 3v-3h-4z" fill="#fff"/><path d="M1288 743.500h10M1288 746h10M1288 748.500h7" stroke="#2a3848" stroke-width="1"/>
<circle cx="1301" cy="755" r="7.500" fill="#3f4a54" stroke="#8a9098"/><text x="1298.500" y="759" font-size="10" fill="#fff">1</text>
<path d="M1323 752c0-8 4-12 9-12h5c3 0 5 4 6 8l-4 6h-12c-3 0-4-1-4-2z" fill="url(#cp)"/>
<rect x="1328" y="752.500" width="15" height="7" rx="1" fill="#f0c020"/><text x="1329.500" y="758.500" font-size="6" font-weight="bold" fill="#111">PRE</text>
<rect x="1361" y="728" width="1" height="40" fill="#4a5866"/>

<!-- watermark -->
<text x="600" y="717" style="font-family:'DejaVu Sans',sans-serif;font-weight:bold" font-size="52" fill="#808080" opacity=".17" stroke="#808080" stroke-width="2" stroke-linejoin="round" textLength="165" lengthAdjust="spacingAndGlyphs">مستقل</text>
<text x="600" y="748" font-size="27" fill="#8a8f94" opacity=".3" textLength="165" lengthAdjust="spacingAndGlyphs">mostaql.com</text>
</svg>
</body></html>
